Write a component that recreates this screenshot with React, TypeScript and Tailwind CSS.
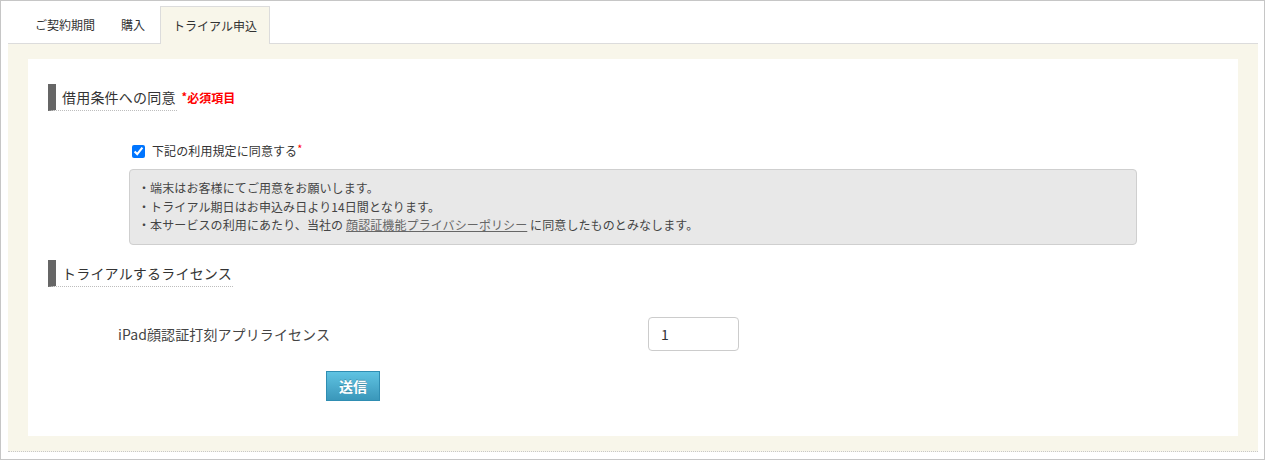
import React from "react";

export default function App() {
  return (
    <div className="w-[1265px] h-[460px] box-border border border-[#c6c6c6] bg-white pt-[5px] pl-[7px] pr-[6px] font-['Noto_Sans_CJK_JP',sans-serif] text-[#333]">
      {/* Tabs */}
      <div className="flex h-[38px] border-b border-[#dcdcdc] text-[12px] leading-none">
        <div className="ml-[14px] h-[37px] px-3 border border-transparent flex items-center text-[#333]">ご契約期間</div>
        <div className="ml-[0px] h-[37px] px-3 border border-transparent flex items-center text-[#333]">購入</div>
        <div className="ml-[2px] h-[38px] px-3 border border-b-0 border-[#dcdcdc] bg-[#f8f6ea] flex items-center text-[#333] relative z-10">トライアル申込</div>
      </div>
      {/* Panel */}
      <div className="bg-[#f8f6ea] px-5 pt-[15px] pb-[15px] border-b border-dotted border-[#c8c8c8]">
        <div className="h-[377px] bg-white pt-[25px] pl-5">
          {/* Heading 1 */}
          <div className="flex items-center">
            <h3 className="h-[27px] border-l-8 border-[#666] border-b border-b-[#bdbdbd] pl-[6px] pr-[1px] text-[14px] tracking-[0.2px] leading-[26px] text-[#333] font-normal" style={{ borderBottomStyle: "dotted" }}>
              借用条件への同意
            </h3>
            <span className="ml-[5px] text-[12px] font-bold text-[#ff0000] leading-none">
              <span className="relative top-[-2px] text-[11px]">*</span>必須項目
            </span>
          </div>
          {/* Checkbox row */}
          <label className="mt-[30px] ml-[84px] h-[20px] flex items-center text-[12px] tracking-[0.1px] text-[#333]">
            <input type="checkbox" defaultChecked className="w-[13px] h-[13px] m-0 accent-[#0075ff]" />
            <span className="ml-[7px]">下記の利用規定に同意する</span>
            <span className="text-[#ff0000] relative top-[-3px] text-[11px]">*</span>
          </label>
          {/* Info box */}
          <div className="mt-[8px] ml-[81px] w-[1008px] border border-[#cfcfcf] rounded-[4px] bg-[#e8e8e8] px-[8px] py-[9px] text-[12px] tracking-[0.1px] leading-[18.7px] text-[#444]">
            <p>・端末はお客様にてご用意をお願いします。</p>
            <p>・トライアル期日はお申込み日より14日間となります。</p>
            <p>
              ・本サービスの利用にあたり、当社の{" "}
              <a className="underline text-[#666]" href="#">顔認証機能プライバシーポリシー</a>{" "}
              に同意したものとみなします。
            </p>
          </div>
          {/* Heading 2 */}
          <div className="mt-[15px] flex">
            <h3 className="h-[27px] border-l-8 border-[#666] border-b border-b-[#bdbdbd] pl-[6px] pr-[1px] text-[14px] tracking-[0.2px] leading-[26px] text-[#333] font-normal" style={{ borderBottomStyle: "dotted" }}>
              トライアルするライセンス
            </h3>
          </div>
          {/* License row */}
          <div className="mt-[30px] flex items-center">
            <div className="ml-[70px] w-[530px] text-[14px] tracking-[0.1px] text-[#444]">iPad顔認証打刻アプリライセンス</div>
            <input
              type="text"
              defaultValue="1"
              className="w-[91px] h-[34px] border border-[#cccccc] rounded-[4px] px-[12px] text-[14px] text-[#333] outline-none bg-white"
            />
          </div>
          {/* Submit */}
          <div className="mt-[20px] ml-[278px]">
            <button className="w-[54px] h-[30px] border border-[#2f8db2] bg-gradient-to-b from-[#5fc3e2] to-[#3a97ba] text-white text-[14px] font-bold leading-none [text-shadow:0_-1px_0_rgba(0,0,0,0.2)]">
              送信
            </button>
          </div>
        </div>
      </div>
    </div>
  );
}
